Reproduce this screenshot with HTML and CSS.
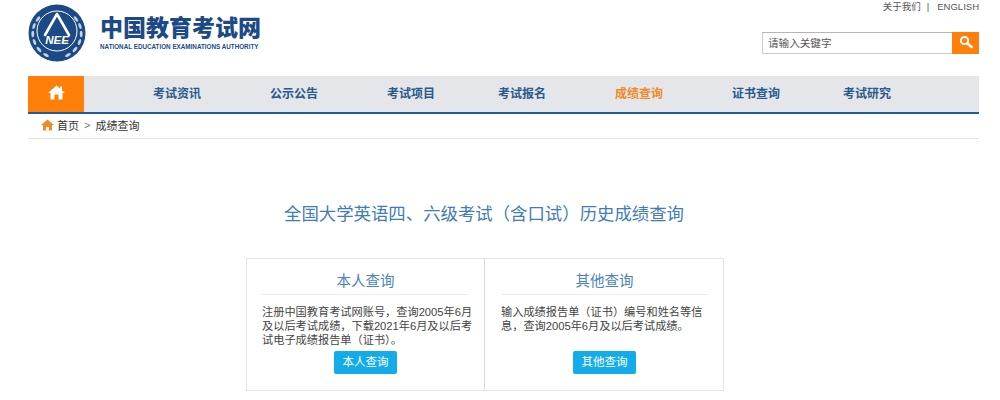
FILE: index.html
```html
<!DOCTYPE html>
<html lang="zh-CN">

<head>
    <meta charset="UTF-8">
    <title>成绩查询</title>
    <link rel="stylesheet" href="styles.css">
</head>

<body>
    <div class="page">
        <div class="header">
            <div class="brand">
                <svg class="emblem" width="58" height="58" viewBox="0 0 58 58">
                    <circle cx="29" cy="29" r="28.5" fill="#1c4a86"/>
                    <g fill="#c3d2e4">
                        <ellipse cx="10" cy="15" rx="1.4" ry="3.2" transform="rotate(35 10 15)"/>
                        <ellipse cx="6" cy="22" rx="1.4" ry="3.2" transform="rotate(20 6 22)"/>
                        <ellipse cx="4.8" cy="30" rx="1.4" ry="3.2"/>
                        <ellipse cx="6.5" cy="38" rx="1.4" ry="3.2" transform="rotate(-20 6.5 38)"/>
                        <ellipse cx="11" cy="45.5" rx="1.4" ry="3.2" transform="rotate(-40 11 45.5)"/>
                        <ellipse cx="18" cy="51" rx="1.4" ry="3.2" transform="rotate(-60 18 51)"/>
                        <ellipse cx="48" cy="15" rx="1.4" ry="3.2" transform="rotate(-35 48 15)"/>
                        <ellipse cx="52" cy="22" rx="1.4" ry="3.2" transform="rotate(-20 52 22)"/>
                        <ellipse cx="53.2" cy="30" rx="1.4" ry="3.2"/>
                        <ellipse cx="51.5" cy="38" rx="1.4" ry="3.2" transform="rotate(20 51.5 38)"/>
                        <ellipse cx="47" cy="45.5" rx="1.4" ry="3.2" transform="rotate(40 47 45.5)"/>
                        <ellipse cx="40" cy="51" rx="1.4" ry="3.2" transform="rotate(60 40 51)"/>
                    </g>
                    <circle cx="29" cy="27" r="20" fill="none" stroke="#fff" stroke-width="1"/>
                    <path d="M29 10 L17 31 M29 10 L41 31" stroke="#fff" stroke-width="2.6" fill="none" stroke-linecap="round"/>
                    <text x="29" y="40" class="emblem-text">NEE</text>
                </svg>
                <div class="brand-name">
                    <div class="brand-cn">中国教育考试网</div>
                    <div class="brand-en">NATIONAL EDUCATION EXAMINATIONS AUTHORITY</div>
                </div>
            </div>
            <div class="tools">
                <div class="links"><a href="#">关于我们</a><span class="sep">|</span><a href="#">ENGLISH</a></div>
                <div class="search">
                    <div class="search-input">请输入关键字</div>
                    <div class="search-btn">
                        <svg width="14" height="14" viewBox="0 0 14 14">
                            <circle cx="5.5" cy="5.5" r="3.6" fill="none" stroke="#fff" stroke-width="2"/>
                            <path d="M8.5 8.5 L12.5 12" stroke="#fff" stroke-width="2.6" stroke-linecap="round"/>
                        </svg>
                    </div>
                </div>
            </div>
        </div>

        <div class="nav">
            <div class="nav-home">
                <svg width="17" height="15" viewBox="0 0 17 15">
                    <path d="M8.5 0.5 L12 3.6 L12 1.5 L14 1.5 L14 5.4 L17 8 L14.5 8 L14.5 14.5 L10.5 14.5 L10.5 9.5 L6.5 9.5 L6.5 14.5 L2.5 14.5 L2.5 8 L0 8 Z" fill="#fff"/>
                </svg>
            </div>
            <ul class="nav-list">
                <li>考试资讯</li>
                <li>公示公告</li>
                <li>考试项目</li>
                <li class="tight">考试报名</li>
                <li class="on">成绩查询</li>
                <li>证书查询</li>
                <li class="tight">考试研究</li>
            </ul>
        </div>

        <div class="crumb">
            <svg width="13" height="12" viewBox="0 0 13 12">
                <path d="M6.5 0.5 L13 6 L11 6 L11 11.5 L2 11.5 L2 6 L0 6 Z" fill="#f08a24"/>
                <path d="M5 11.5 V8 H8 V11.5 Z" fill="#fff"/>
            </svg>
            <span>首页</span><span class="gt">&gt;</span><span>成绩查询</span>
        </div>

        <h1 class="title">全国大学英语四、六级考试（含口试）历史成绩查询</h1>

        <div class="cards">
            <div class="card">
                <h2>本人查询</h2>
                <p>注册中国教育考试网账号，查询2005年6月及以后考试成绩，下载2021年6月及以后考试电子成绩报告单（证书）。</p>
                <a href="#" class="btn">本人查询</a>
            </div>
            <div class="card">
                <h2>其他查询</h2>
                <p>输入成绩报告单（证书）编号和姓名等信息，查询2005年6月及以后考试成绩。</p>
                <a href="#" class="btn">其他查询</a>
            </div>
        </div>
    </div>
</body>

</html>
```

FILE: styles.css
```css
*{
    margin: 0;padding: 0;
    box-sizing: border-box;
}
html,body{
    height: 400px;
    overflow: hidden;
}
body{
    background: #fff;
    color: #444;
    font-family: "Liberation Sans", "Noto Sans CJK SC", sans-serif;
    font-size: 12px;
}
ul{
    list-style: none;
}
a{
    text-decoration: none;
    color: inherit;
}
.page{
    width: 951px;
    margin-left: 28px;
}
.header{
    display: flex;
    justify-content: space-between;
    height: 76px;
}
.brand{
    display: flex;
    padding-top: 4px;
}
.emblem-text{
    font-family: "Liberation Sans", sans-serif;
    font-size: 11.5px;
    font-weight: bold;
    font-style: italic;
    fill: #fff;
    text-anchor: middle;
}
.brand-name{
    margin-left: 14px;
    padding-top: 11px;
}
.brand-cn{
    color: #1c4a86;
    font-size: 23px;
    font-weight: 900;
    line-height: 27px;
    white-space: nowrap;
}
.brand-en{
    color: #1c4a86;
    font-size: 6.3px;
    font-weight: bold;
    line-height: 8px;
    margin-top: 1px;
    white-space: nowrap;
}
.tools{
    display: flex;
    flex-direction: column;
    align-items: flex-end;
}
.links{
    font-size: 9.5px;
    line-height: 14px;
    color: #555;
}
.sep{
    margin: 0 8px 0 6px;
}
.search{
    display: flex;
    width: 217px;
    height: 22px;
    margin-top: 18px;
}
.search-input{
    flex: 1;
    border: 1px solid #ccc;
    border-top-color: #b5b5b5;
    border-right: 0;
    padding-left: 5px;
    font-size: 10.6px;
    line-height: 20px;
    color: #555;
}
.search-btn{
    width: 27px;
    background: #ff7f0a;
    display: flex;
    justify-content: center;
    align-items: center;
    padding-bottom: 2px;
}
.nav{
    display: flex;
    height: 38px;
    background: #e4e6ea;
    border-bottom: 2px solid #1f5c99;
}
.nav-home{
    width: 56px;
    background: #ff7f0a;
    display: flex;
    justify-content: center;
    padding-top: 9px;
}
.nav-home svg{
    display: block;
}
.nav-list{
    display: flex;
}
.nav-list li{
    margin-left: 69px;
    width: 48px;
    line-height: 36px;
    font-size: 12px;
    font-weight: bold;
    color: #2a5a8c;
    white-space: nowrap;
}
.nav-list li.tight{
    margin-left: 63px;
}
.nav-list li.on{
    color: #f08a24;
}
.crumb{
    display: flex;
    align-items: center;
    height: 25px;
    padding: 0 0 2px 13px;
    border-bottom: 1px solid #e2e2e2;
    font-size: 11px;
    color: #333;
}
.crumb span{
    margin-left: 3px;
}
.crumb .gt{
    margin: 0 2px 0 5px;
    color: #777;
}
.title{
    margin-top: 63px;
    height: 24px;
    width: 912px;
    text-align: center;
    font-size: 17.4px;
    font-weight: normal;
    line-height: 24px;
    color: #3f7cb8;
}
.cards{
    display: flex;
    width: 478px;
    height: 133px;
    margin: 32px 0 0 218px;
    border: 1px solid #e2e4e8;
}
.card{
    flex: 1;
    display: flex;
    flex-direction: column;
    padding: 11px 15px 0;
}
.card:first-child{
    flex: none;
    width: 237px;
}
.card + .card{
    border-left: 1px solid #d8dadf;
    padding-left: 16px;
}
.card h2{
    height: 25px;
    border-bottom: 1px solid #ececec;
    text-align: center;
    font-size: 14.5px;
    font-weight: normal;
    line-height: 22px;
    color: #4b82bb;
}
.card p{
    height: 46px;
    margin: 10px -5px 0 0;
    font-size: 11.2px;
    line-height: 14px;
    color: #444;
}
.btn{
    align-self: center;
    width: 63px;
    height: 23px;
    border-radius: 2px;
    background: #13ace8;
    color: #fff;
    font-size: 11.5px;
    line-height: 22px;
    text-align: center;
}
```
